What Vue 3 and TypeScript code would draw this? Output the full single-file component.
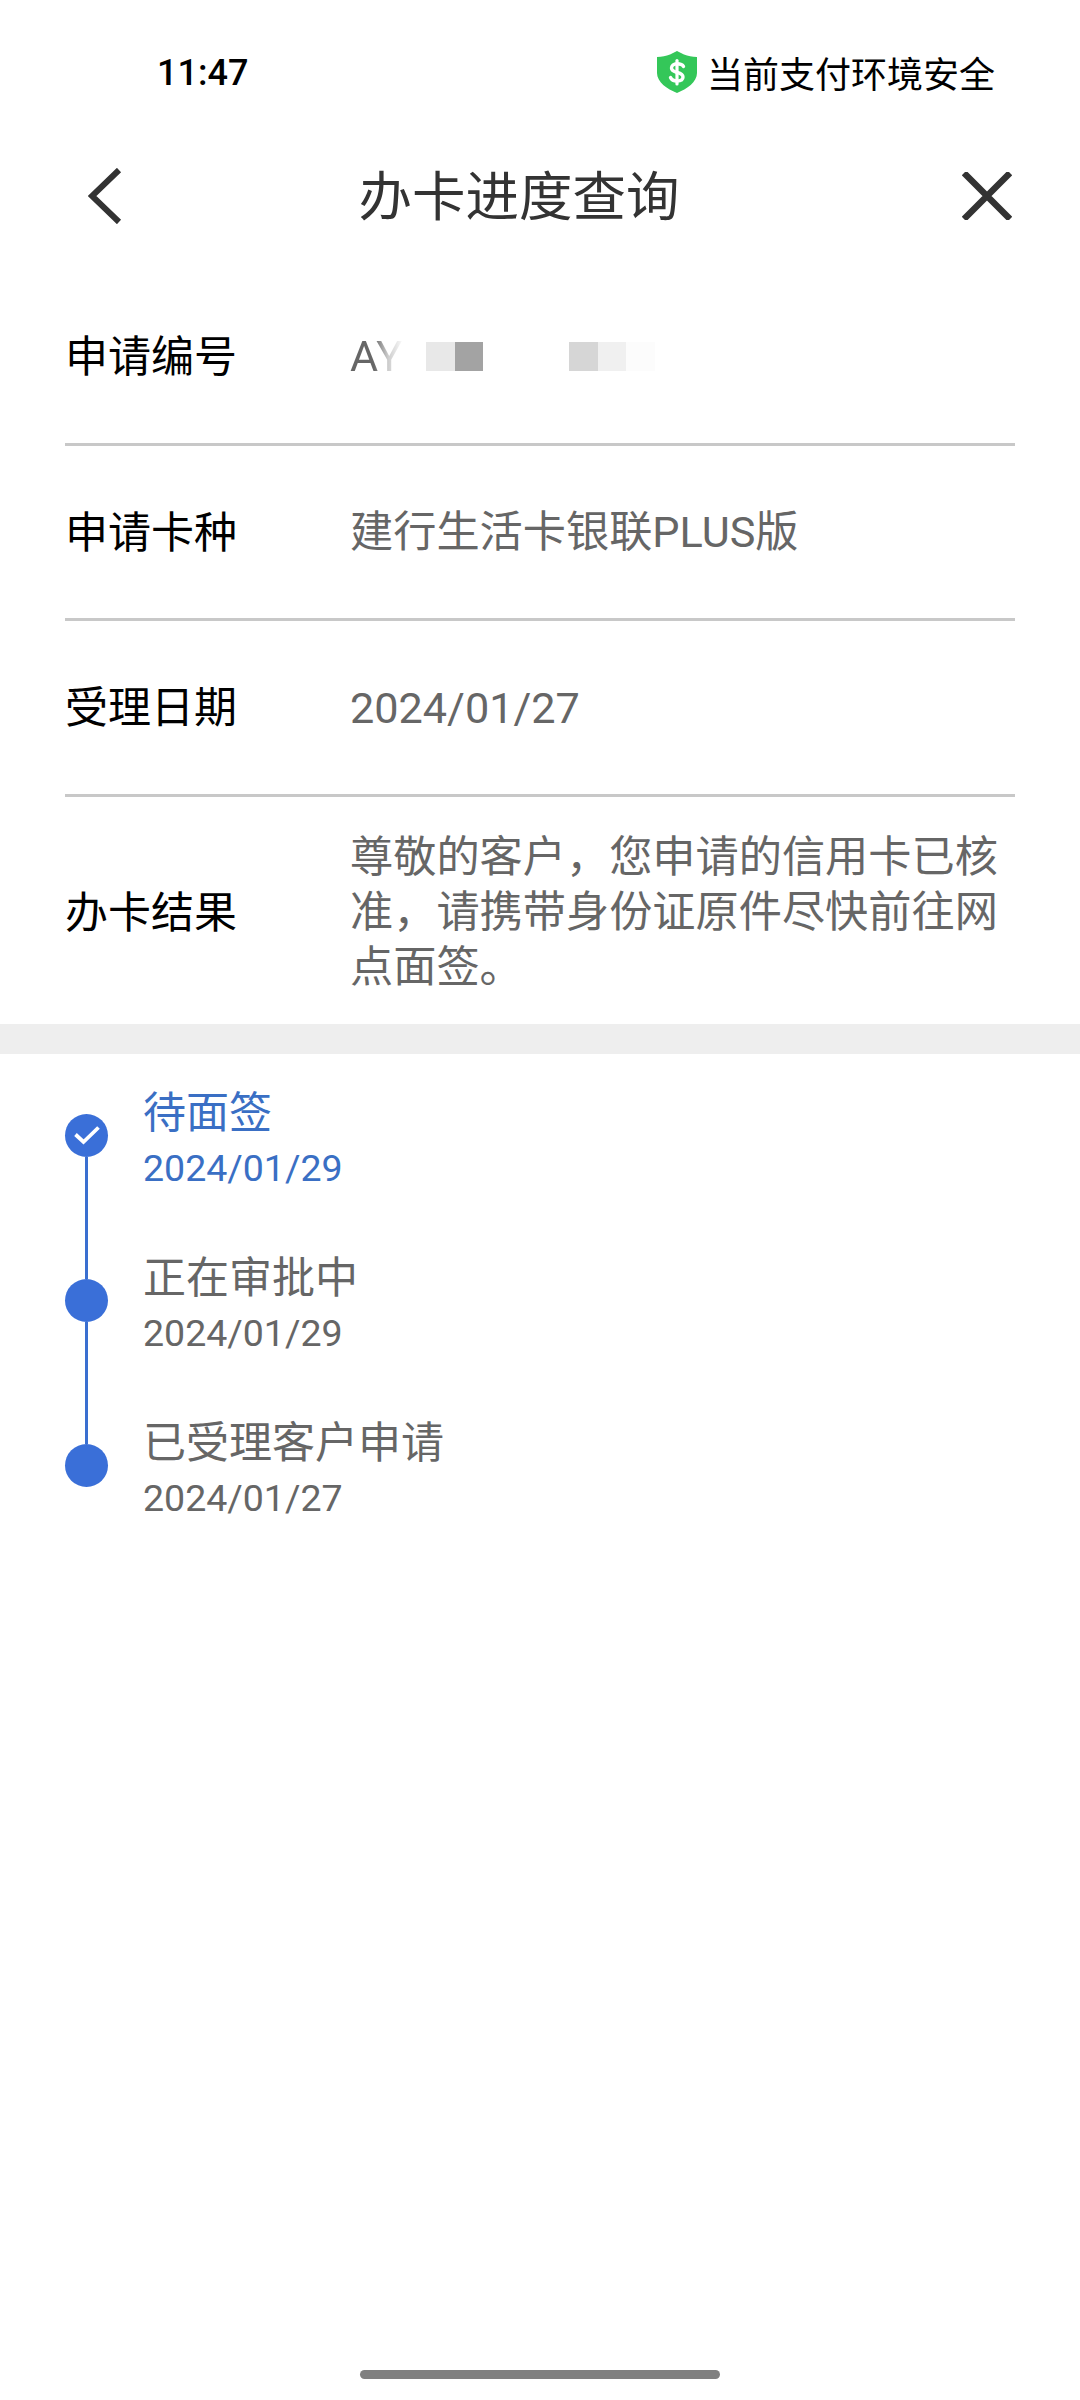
<script setup lang="ts">
const steps = [
  { title: '待面签', date: '2024/01/29', done: true },
  { title: '正在审批中', date: '2024/01/29', done: false },
  { title: '已受理客户申请', date: '2024/01/27', done: false },
];
</script>

<template>
  <div class="page">
    <div class="status">
      <span class="time">11:47</span>
      <div class="safe">
        <svg width="40" height="42" viewBox="0 0 40 42">
          <path d="M20 0 L27 3.5 C31 5 35 6 40 6 V22 C40 31 30 38 20 42 C10 38 0 31 0 22 V6 C5 6 9 5 13 3.5 Z" fill="#34c759" />
          <path d="M26.5 15.5 C25.5 13.5 23 12.8 20 12.8 C16.5 12.8 14.5 14.6 14.5 17 C14.5 23 26 20 26 26 C26 28.6 23.5 30 20 30 C17 30 14.5 28.8 13.5 26.5" fill="none" stroke="#fff" stroke-width="3.4" stroke-linecap="round" />
          <path d="M20 9.5 V33" stroke="#fff" stroke-width="3.2" stroke-linecap="round" />
        </svg>
        <span>当前支付环境安全</span>
      </div>
    </div>

    <div class="header">
      <svg class="back" width="34" height="56" viewBox="0 0 34 56">
        <path d="M31 2 L4 28 L31 54" fill="none" stroke="#333" stroke-width="6" />
      </svg>
      <span class="title">办卡进度查询</span>
      <svg class="close" width="50" height="48" viewBox="0 0 50 48">
        <path d="M2 1 L48 47 M48 1 L2 47" fill="none" stroke="#333" stroke-width="6.5" />
      </svg>
    </div>

    <div class="rows">
      <div class="row">
        <span class="label">申请编号</span>
        <div class="value masked">
          <span class="ay">AY</span>
          <i class="blk b1"></i><i class="blk b2"></i>
          <i class="blk b3"></i><i class="blk b4"></i><i class="blk b5"></i>
        </div>
      </div>
      <div class="row">
        <span class="label">申请卡种</span>
        <span class="value">建行生活卡银联PLUS版</span>
      </div>
      <div class="row">
        <span class="label">受理日期</span>
        <span class="value">2024/01/27</span>
      </div>
      <div class="row last">
        <span class="label">办卡结果</span>
        <span class="value">尊敬的客户，您申请的信用卡已核准，请携带身份证原件尽快前往网点面签。</span>
      </div>
    </div>

    <div class="band"></div>

    <div class="timeline">
      <div v-for="(s, i) in steps" :key="s.title" class="step" :class="{ active: s.done }">
        <div class="rail">
          <div class="seg top" :class="{ none: i === 0 }"></div>
          <div class="dot">
            <svg v-if="s.done" width="28" height="22" viewBox="0 0 28 22">
              <path d="M2.5 10.5 L10.5 18 L25.5 3.5" fill="none" stroke="#fff" stroke-width="3.8" />
            </svg>
          </div>
          <div class="seg bottom" :class="{ none: i === steps.length - 1 }"></div>
        </div>
        <div class="info">
          <div class="step-title">{{ s.title }}</div>
          <div class="step-date">{{ s.date }}</div>
        </div>
      </div>
    </div>

    <div class="home"></div>
  </div>
</template>

<style>
html,
body {
  margin: 0;
  background: #fff;
}
</style>

<style scoped>
.page {
  width: 1080px;
  height: 2400px;
  display: flex;
  flex-direction: column;
  overflow: hidden;
  background: #fff;
  font-family: Roboto, "Noto Sans CJK SC", sans-serif;
}

.status {
  height: 144px;
  display: flex;
  align-items: center;
  justify-content: space-between;
  padding: 0 85px 0 157px;
  color: #000;
}

.time {
  font-size: 36px;
  font-weight: 500;
  padding-top: 2px;
}

.safe {
  display: flex;
  align-items: center;
  gap: 10px;
  font-size: 36px;
}

.header {
  height: 106px;
  display: flex;
  align-items: center;
  justify-content: space-between;
  padding: 0 68px 0 88px;
}

.back,
.close {
  margin-bottom: 3px;
}

.title {
  font-size: 53.5px;
  color: #333;
  margin-right: 46px;
  padding-bottom: 10px;
}

.rows {
  margin-top: 20px;
  padding: 0 65px;
}

.row {
  height: 172.5px;
  display: flex;
  align-items: center;
  border-bottom: 3px solid #c8c8c8;
}

.row.last {
  height: 227px;
  border-bottom: 0;
}

.label {
  width: 285px;
  flex-shrink: 0;
  font-size: 43px;
  color: #000;
  padding-bottom: 6px;
}

.value {
  font-size: 43.2px;
  line-height: 55px;
  color: #666;
  padding-top: 2px;
}

.last .label {
  padding-bottom: 2px;
}

.last .value {
  padding-top: 4px;
}

.masked {
  display: flex;
  align-items: center;
  padding-top: 0;
}

.ay {
  width: 76px;
  background: linear-gradient(90deg, #666 0, #666 24px, #ccc 38px, #fff 54px);
  -webkit-background-clip: text;
  background-clip: text;
  color: transparent;
}

.blk {
  width: 28.5px;
  height: 29px;
}

.b1 { background: #e8e8e8; }
.b2 { background: #a3a3a3; }
.b3 { background: #d6d6d6; margin-left: 86px; }
.b4 { background: #f0f0f0; }
.b5 { background: #fcfcfc; }

.band {
  height: 30px;
  background: #eee;
}

.timeline {
  padding-top: 35px;
}

.step {
  height: 165px;
  display: flex;
  padding-left: 65px;
}

.rail {
  width: 43px;
  display: flex;
  flex-direction: column;
  align-items: center;
  margin-right: 35px;
}

.seg {
  width: 3px;
  background: #3a6fd0;
}

.top {
  height: 25px;
}

.bottom {
  flex: 1;
}

.none {
  background: transparent;
}

.dot {
  width: 43px;
  height: 43px;
  flex-shrink: 0;
  border-radius: 50%;
  background: #3a6fd8;
  display: flex;
  align-items: center;
  justify-content: center;
}

.step-title {
  font-size: 43px;
  line-height: 46px;
  padding-top: 1px;
  color: #666;
}

.step-date {
  font-size: 37.5px;
  line-height: 44px;
  margin-top: 10px;
  color: #666;
}

.active .step-title,
.active .step-date {
  color: #3a6fc4;
}

.home {
  width: 360px;
  height: 9px;
  margin: auto 0 21px 360px;
  border-radius: 5px;
  background: #808080;
}
</style>
